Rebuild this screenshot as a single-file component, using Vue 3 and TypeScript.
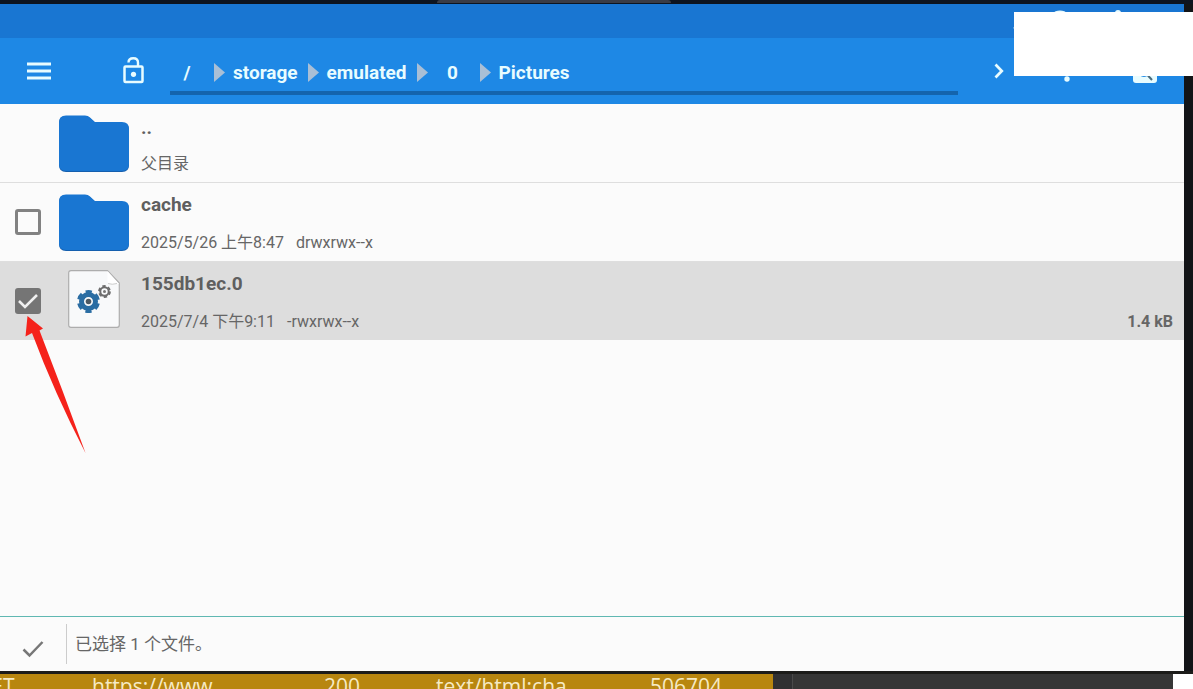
<script setup lang="ts">
import { ref } from 'vue'

interface Entry {
  id: string
  name: string
  detail: string
  mode?: string
  size?: string
  kind: 'folder' | 'file'
  selectable: boolean
  checked: boolean
}

const crumbs = ['/', 'storage', 'emulated', '0', 'Pictures']

const entries = ref<Entry[]>([
  { id: 'parent', name: '..', detail: '父目录', kind: 'folder', selectable: false, checked: false },
  { id: 'cache', name: 'cache', detail: '2025/5/26 上午8:47', mode: 'drwxrwx--x', kind: 'folder', selectable: true, checked: false },
  { id: 'cert', name: '155db1ec.0', detail: '2025/7/4 下午9:11', mode: '-rwxrwx--x', size: '1.4 kB', kind: 'file', selectable: true, checked: true },
])
</script>

<template>
  <div class="screen">
    <div class="bezel"><div class="notch"></div></div>

    <div class="device">
      <div class="status">
        <svg class="wifi" viewBox="0 0 24 24" aria-hidden="true"><path d="M0 18 L12 24 L24 18 Q12 8 0 18Z" /></svg>
        <svg class="clock" viewBox="0 0 24 24" aria-hidden="true"><circle cx="12" cy="12" r="10" fill="none" stroke="currentColor" stroke-width="3" /></svg>
        <svg class="battery" viewBox="0 0 16 24" aria-hidden="true"><path d="M5 3 Q5 0 8 0 Q11 0 11 3 H14 V23 H2 V3Z" /></svg>
      </div>

      <header class="toolbar">
        <button class="menu" type="button" aria-label="Menu">
          <svg viewBox="0 0 24 18"><path d="M0 2H24M0 9H24M0 16H24" fill="none" stroke="currentColor" stroke-width="3" /></svg>
        </button>
        <button class="lock" type="button" aria-label="Lock">
          <svg viewBox="0 0 21 28">
            <rect x="1.5" y="9.5" width="18" height="15.5" rx="1" fill="none" stroke="currentColor" stroke-width="2.5" />
            <path d="M5.5 5.5C5.5 2.7 7.5 1.2 10.3 1.2S15 3 15 5.7V9" fill="none" stroke="currentColor" stroke-width="2.4" />
            <circle cx="10.5" cy="17.3" r="2.6" />
          </svg>
        </button>
        <nav class="crumbs">
          <template v-for="(crumb, i) in crumbs" :key="crumb">
            <svg v-if="i > 0" class="sep" viewBox="0 0 11 19" aria-hidden="true"><path d="M0 0L11 9.5L0 19Z" /></svg>
            <button class="crumb" :class="{ root: i === 0 }" type="button">{{ crumb }}</button>
          </template>
        </nav>
        <div class="actions">
          <button class="next" type="button" aria-label="Next">
            <svg viewBox="0 0 10 16"><path d="M1.5 1.5L7.8 8L1.5 14.5" fill="none" stroke="currentColor" stroke-width="2.7" /></svg>
          </button>
          <button class="more" type="button" aria-label="More">
            <svg viewBox="0 0 6 22"><circle cx="3" cy="3" r="2.7" /><circle cx="3" cy="11" r="2.7" /><circle cx="3" cy="19" r="2.7" /></svg>
          </button>
          <button class="find" type="button" aria-label="Search">
            <svg viewBox="0 0 24 24">
              <rect width="24" height="24" rx="3" />
              <circle cx="11" cy="12" r="5" fill="none" stroke="#1e88e5" stroke-width="2" />
              <path d="M14.5 16L19 21" stroke="#4a6b7c" stroke-width="2" />
            </svg>
          </button>
        </div>
      </header>

      <main class="list">
        <div v-for="entry in entries" :key="entry.id" class="row" :class="{ selected: entry.checked }">
          <div class="pick">
            <template v-if="entry.selectable">
              <input :id="entry.id" v-model="entry.checked" type="checkbox" :aria-label="entry.name" />
              <svg v-if="entry.checked" class="tick" viewBox="0 0 26 26" aria-hidden="true"><path d="M4 13L10 19L22 7" fill="none" stroke="#f0f0f0" stroke-width="2.6" /></svg>
            </template>
          </div>
          <div class="icon">
            <svg v-if="entry.kind === 'folder'" class="folder" viewBox="0 0 70 58" aria-hidden="true">
              <path d="M7 1H26Q29 1 31 3L36 8H63Q70 8 70 15V50Q70 57 63 57H7Q0 57 0 50V8Q0 1 7 1Z" fill="#155fae" />
              <path d="M7 .5H26Q29 .5 31 2.5L36 7H63Q70 7 70 14V49Q70 56 63 56H7Q0 56 0 49V7.5Q0 .5 7 .5Z" fill="#1976d2" />
            </svg>
            <svg v-else class="file" viewBox="0 0 52 58" aria-hidden="true">
              <path d="M3 .7H39.5L51.3 13V55Q51.3 57.3 49 57.3H3Q.7 57.3 .7 55V3Q.7 .7 3 .7Z" fill="#f8f9fa" stroke="#adadad" stroke-width="1.2" />
              <path d="M39.5 1V11Q39.5 14 42.5 14H51Z" fill="#fff" />
              <path d="M40 13.5Q44 15 49 13.5" fill="none" stroke="#ccc" />
              <g fill="none" stroke="#2a6da3">
                <circle cx="20.5" cy="31.5" r="7" stroke-width="5" />
                <circle cx="20.5" cy="31.5" r="9.7" stroke-width="3.6" stroke-dasharray="6 4.16" stroke-dashoffset="-2" />
              </g>
              <circle cx="20.5" cy="31.5" r="2.8" fill="#4c5963" />
              <g fill="none" stroke="#6d6d6d">
                <circle cx="36.5" cy="21.5" r="4.2" stroke-width="2" />
                <circle cx="36.5" cy="21.5" r="5.5" stroke-width="1.8" stroke-dasharray="3.4 2.36" />
              </g>
              <circle cx="36.5" cy="21.5" r="1.5" fill="#777" />
            </svg>
          </div>
          <label class="text" :for="entry.selectable ? entry.id : undefined">
            <span class="name">{{ entry.name }}</span>
            <span class="detail"><span>{{ entry.detail }}</span><span v-if="entry.mode">{{ entry.mode }}</span></span>
          </label>
          <span class="size">{{ entry.size }}</span>
          <svg v-if="entry.id === 'cert'" class="pointer" viewBox="0 0 64 138" aria-hidden="true">
            <path d="M6.5 0L22 12.5L18.5 14.5Q42 75 64.5 137Q33 76 11 17L4.5 20.5Z" fill="#f5221b" />
          </svg>
        </div>
      </main>

      <footer class="selection">
        <button class="done" type="button" aria-label="Done">
          <svg viewBox="0 0 22 18"><path d="M1.5 9.5L7.5 15.5L20.5 2" fill="none" stroke="currentColor" stroke-width="2.5" /></svg>
        </button>
        <p class="message">已选择 1 个文件。</p>
      </footer>
    </div>

    <div class="behind">
      <div class="log">
        <table>
          <tbody>
            <tr><td class="method">GET</td><td class="host">https://www</td><td class="code">200</td><td class="type">text/html;cha</td><td>506704</td></tr>
          </tbody>
        </table>
      </div>
      <div class="panel"></div>
      <div class="corner"></div>
    </div>

    <div class="cover"></div>
  </div>
</template>

<style>
body { margin: 0; }
</style>

<style scoped>
* { box-sizing: border-box; }
.screen {
  position: relative;
  display: flex;
  flex-direction: column;
  height: 100vh;
  overflow: hidden;
  background: #121417;
  font-family: Roboto, "Noto Sans CJK SC", sans-serif;
  color: #666;
}
button {
  display: flex;
  align-items: center;
  justify-content: center;
  padding: 0;
  border: 0;
  background: none;
  color: inherit;
  font: inherit;
}
svg { display: block; fill: currentColor; flex: none; }
.bezel { height: 4px; display: flex; justify-content: center; background: #0d1420; }
.notch { width: 234px; height: 3px; margin-right: 86px; border-radius: 4px 4px 0 0; background: #3a3c46; }
.device {
  flex: 1;
  min-height: 0;
  display: flex;
  flex-direction: column;
  margin-right: 9px;
  background: #fbfbfb;
}
.status {
  display: flex;
  justify-content: flex-end;
  height: 34px;
  padding: 6px 58px 0 0;
  background: #1976d2;
  color: #e6fbff;
}
.wifi, .clock { width: 24px; height: 24px; }
.wifi { margin-right: 11px; }
.clock { margin-right: 38px; }
.battery { width: 16px; height: 24px; }
.toolbar {
  display: flex;
  align-items: center;
  height: 66px;
  padding-left: 27px;
  background: #1e88e5;
  color: #e8fcff;
}
.menu svg { width: 24px; height: 18px; }
.lock { margin: 0 26px 0 72px; }
.lock svg { width: 21px; height: 28px; }
.crumbs {
  flex: 1;
  align-self: flex-start;
  display: flex;
  align-items: center;
  height: 57px;
  padding-top: 15px;
  border-bottom: 4px solid #1464ad;
}
.crumb {
  height: 36px;
  min-width: 52px;
  padding: 0 10px 0 8px;
  font-size: 19px;
  font-weight: 700;
}
.root { min-width: 44px; padding-right: 18px; }
.sep { width: 11px; height: 19px; color: #a9bfd6; }
.actions { display: flex; align-items: center; width: 226px; padding-left: 36px; }
.next svg { width: 10px; height: 16px; }
.more { margin-left: 60px; }
.more svg { width: 6px; height: 22px; }
.find { margin-left: 63px; }
.find svg { width: 24px; height: 24px; }
.list { flex: 1; min-height: 0; }
.row {
  position: relative;
  display: grid;
  grid-template-columns: 59px 82px 1fr auto;
  height: 79px;
  border-bottom: 1px solid #dedede;
}
.row:last-child { height: 78px; border-bottom: 0; }
.selected { background: #ddd; }
.pick { display: grid; align-items: center; padding-left: 15px; }
.pick > * { grid-area: 1 / 1; width: 26px; height: 26px; }
.pick input {
  appearance: none;
  margin: 0;
  border: 3px solid #828282;
  border-radius: 3px;
}
.pick input:checked { border: 0; background: #757575; }
.tick { pointer-events: none; }
.icon { display: flex; align-items: flex-start; padding-top: 11px; }
.folder { width: 70px; height: 58px; }
.file { width: 52px; height: 58px; margin: -3px 0 0 9px; }
.text { display: flex; flex-direction: column; gap: 14px; padding-top: 10px; }
.name { font-size: 19px; line-height: 24px; font-weight: 700; color: #5f5f5f; }
.detail { display: flex; gap: 12px; font-size: 16px; line-height: 24px; }
.row:first-child .text { gap: 12px; padding-top: 12px; }
.size { align-self: end; padding: 0 11px 6px 0; font-size: 16px; line-height: 24px; font-weight: 700; }
.pointer { position: absolute; left: 21px; top: 54px; width: 64px; height: 138px; overflow: visible; }
.selection {
  display: flex;
  align-items: center;
  height: 55px;
  border-top: 1px solid #5fb8b2;
}
.done { width: 66px; padding-top: 10px; color: #777; }
.done svg { width: 22px; height: 18px; }
.message {
  height: 40px;
  margin: 0;
  padding-left: 8px;
  border-left: 1px solid #ccc;
  font-size: 17px;
  line-height: 40px;
}
.behind { display: flex; height: 18px; border-top: 3px solid #1c1c1a; background: #303032; }
.log { width: 773px; overflow: hidden; background: #b8860f; }
table {
  width: 797px;
  margin-left: -24px;
  border-collapse: collapse;
  table-layout: fixed;
  color: #f6eac4;
  font-family: "Open Sans", "Noto Sans", sans-serif;
  font-size: 21px;
  line-height: 24px;
}
td { padding: 0; white-space: nowrap; }
.method { width: 116px; }
.host { width: 232px; }
.code { width: 112px; }
.type { width: 214px; }
.panel { flex: 1; margin-left: 19px; border-left: 1px solid #4a4a4a; background: #363636; }
.corner { width: 20px; background: #fff; }
.cover { position: absolute; top: 12px; right: 0; width: 179px; height: 64px; background: #fff; }
</style>
